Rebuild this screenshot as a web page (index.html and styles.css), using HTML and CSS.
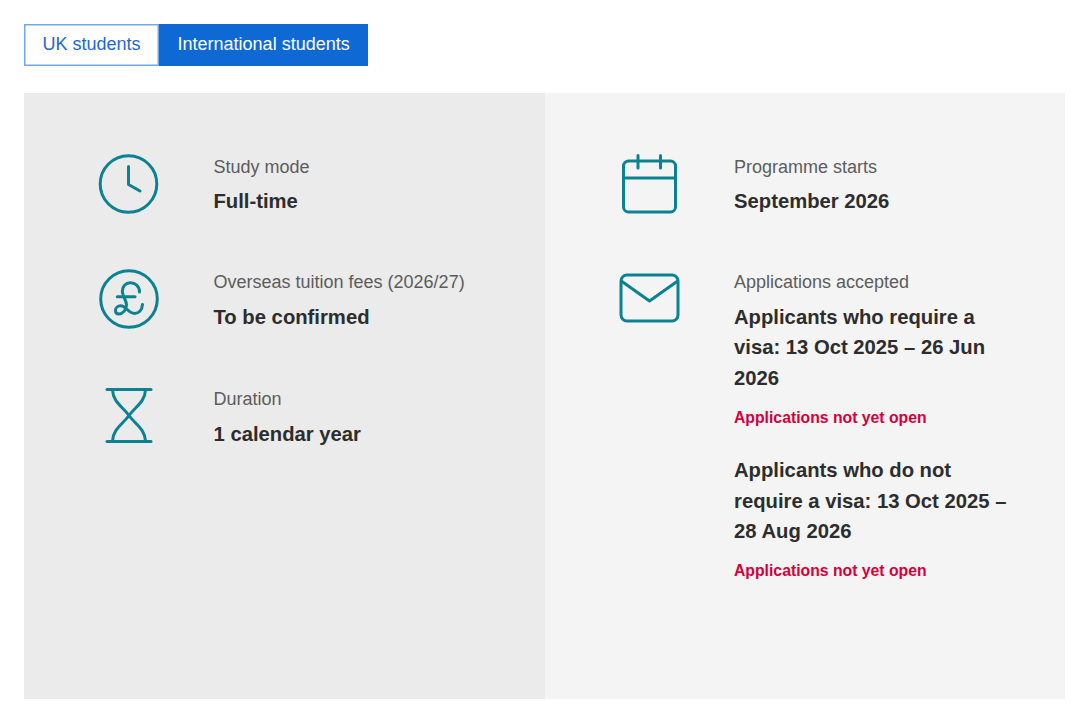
FILE: index.html
```html
<!DOCTYPE html>
<html lang="en">
<head>
<meta charset="utf-8">
<title>Programme key information</title>
<link rel="stylesheet" href="styles.css">
</head>
<body>

<div class="tabs">
  <a class="tab" href="#">UK students</a>
  <a class="tab tab-active" href="#">International students</a>
</div>

<div class="panels">
  <div class="panel panel-dark">
    <div class="item">
      <svg class="icon" viewBox="0 0 60 60">
        <circle cx="29.500" cy="30" r="28.300"/>
        <path d="M29.500 12.500V30.500L41 37"/>
      </svg>
      <div class="info">
        <p class="label">Study mode</p>
        <p class="value">Full-time</p>
      </div>
    </div>
    <div class="item">
      <svg class="icon" viewBox="0 0 60 60">
        <circle cx="30" cy="30" r="28.300"/>
        <path d="M40.500 23C40.500 17 36 13.800 31.500 13.800C26.500 13.800 23.300 17.500 23.300 22C23.300 27 27.500 31 27.500 36C27.500 41 23.500 45 20 45C17 45 16.500 43 16.500 41.500C16.500 38.500 19 36.800 21.500 36.800C27 36.800 29.500 44.500 35.500 44.500C40 44.500 43 41 43.500 35.500"/>
        <path d="M18.300 27.800H36"/>
      </svg>
      <div class="info">
        <p class="label">Overseas tuition fees (2026/27)</p>
        <p class="value">To be confirmed</p>
      </div>
    </div>
    <div class="item item-last">
      <svg class="icon" viewBox="0 0 60 60">
        <path d="M8 3.500H52"/>
        <path d="M8 55.500H52"/>
        <path d="M13.500 4C14 16 24 21 30 29.500C36 38 46 43 46.500 55"/>
        <path d="M46.500 4C46 16 36 21 30 29.500C24 38 14 43 13.500 55"/>
      </svg>
      <div class="info">
        <p class="label">Duration</p>
        <p class="value">1 calendar year</p>
      </div>
    </div>
  </div>

  <div class="panel panel-light">
    <div class="item">
      <svg class="icon" viewBox="0 0 60 60">
        <rect x="4.500" y="7" width="52" height="51" rx="5"/>
        <path d="M4.500 24H56.500"/>
        <path d="M19 1.500V14"/>
        <path d="M41.500 1.500V14"/>
      </svg>
      <div class="info">
        <p class="label">Programme starts</p>
        <p class="value">September 2026</p>
      </div>
    </div>
    <div class="item">
      <svg class="icon" viewBox="0 0 60 60">
        <rect x="2" y="6" width="57" height="46" rx="6"/>
        <path d="M3 12.500L30.500 32L58 12.500"/>
      </svg>
      <div class="info">
        <p class="label">Applications accepted</p>
        <p class="value">Applicants who require a visa: 13 Oct 2025 – 26 Jun 2026</p>
        <p class="status">Applications not yet open</p>
        <p class="value">Applicants who do not require a visa: 13 Oct 2025 – 28 Aug 2026</p>
        <p class="status">Applications not yet open</p>
      </div>
    </div>
  </div>
</div>

</body>
</html>
```

FILE: styles.css
```css
body {
	margin: 0;
	padding: 24px 15px 16px 24px;
	font-family: "Liberation Sans", Arial, sans-serif;
	color: #2d2d2d;
	background: #fff;
}
p {
	margin: 0;
}
.tabs {
	display: flex;
	margin-bottom: 27px;
}
.tab {
	padding: 0 18.500px 2px;
	font-size: 18px;
	line-height: 40px;
	color: #1c68cc;
	text-decoration: none;
	box-shadow: inset 0 0 0 1.500px #72a7e8;
}
.tab-active {
	color: #fff;
	background: #0f69d4;
	box-shadow: none;
}
.panels {
	display: grid;
	grid-template-columns: 1fr 1fr;
	height: 606px;
}
.panel {
	display: flex;
	flex-direction: column;
	gap: 52.800px;
	padding: 60.500px 50px 0 74.500px;
}
.panel-dark {
	background: #ebebeb;
}
.panel-light {
	background: #f4f4f4;
}
.item {
	display: flex;
	gap: 55px;
}
.item-last {
	margin-top: 1px;
}
.icon {
	flex: none;
	width: 60px;
	height: 60px;
	overflow: visible;
	fill: none;
	stroke: #0a8291;
	stroke-width: 3;
	stroke-linecap: round;
	stroke-linejoin: round;
}
.label {
	margin-bottom: 5.800px;
	font-size: 18px;
	line-height: 27px;
	color: #5c5c5c;
}
.value {
	font-size: 20.250px;
	font-weight: bold;
	line-height: 30.300px;
}
.status {
	margin: 12.800px 0 26px;
	font-size: 15.750px;
	font-weight: bold;
	line-height: 23.600px;
	color: #d5003c;
}
.status:last-child {
	margin-bottom: 0;
}
```
